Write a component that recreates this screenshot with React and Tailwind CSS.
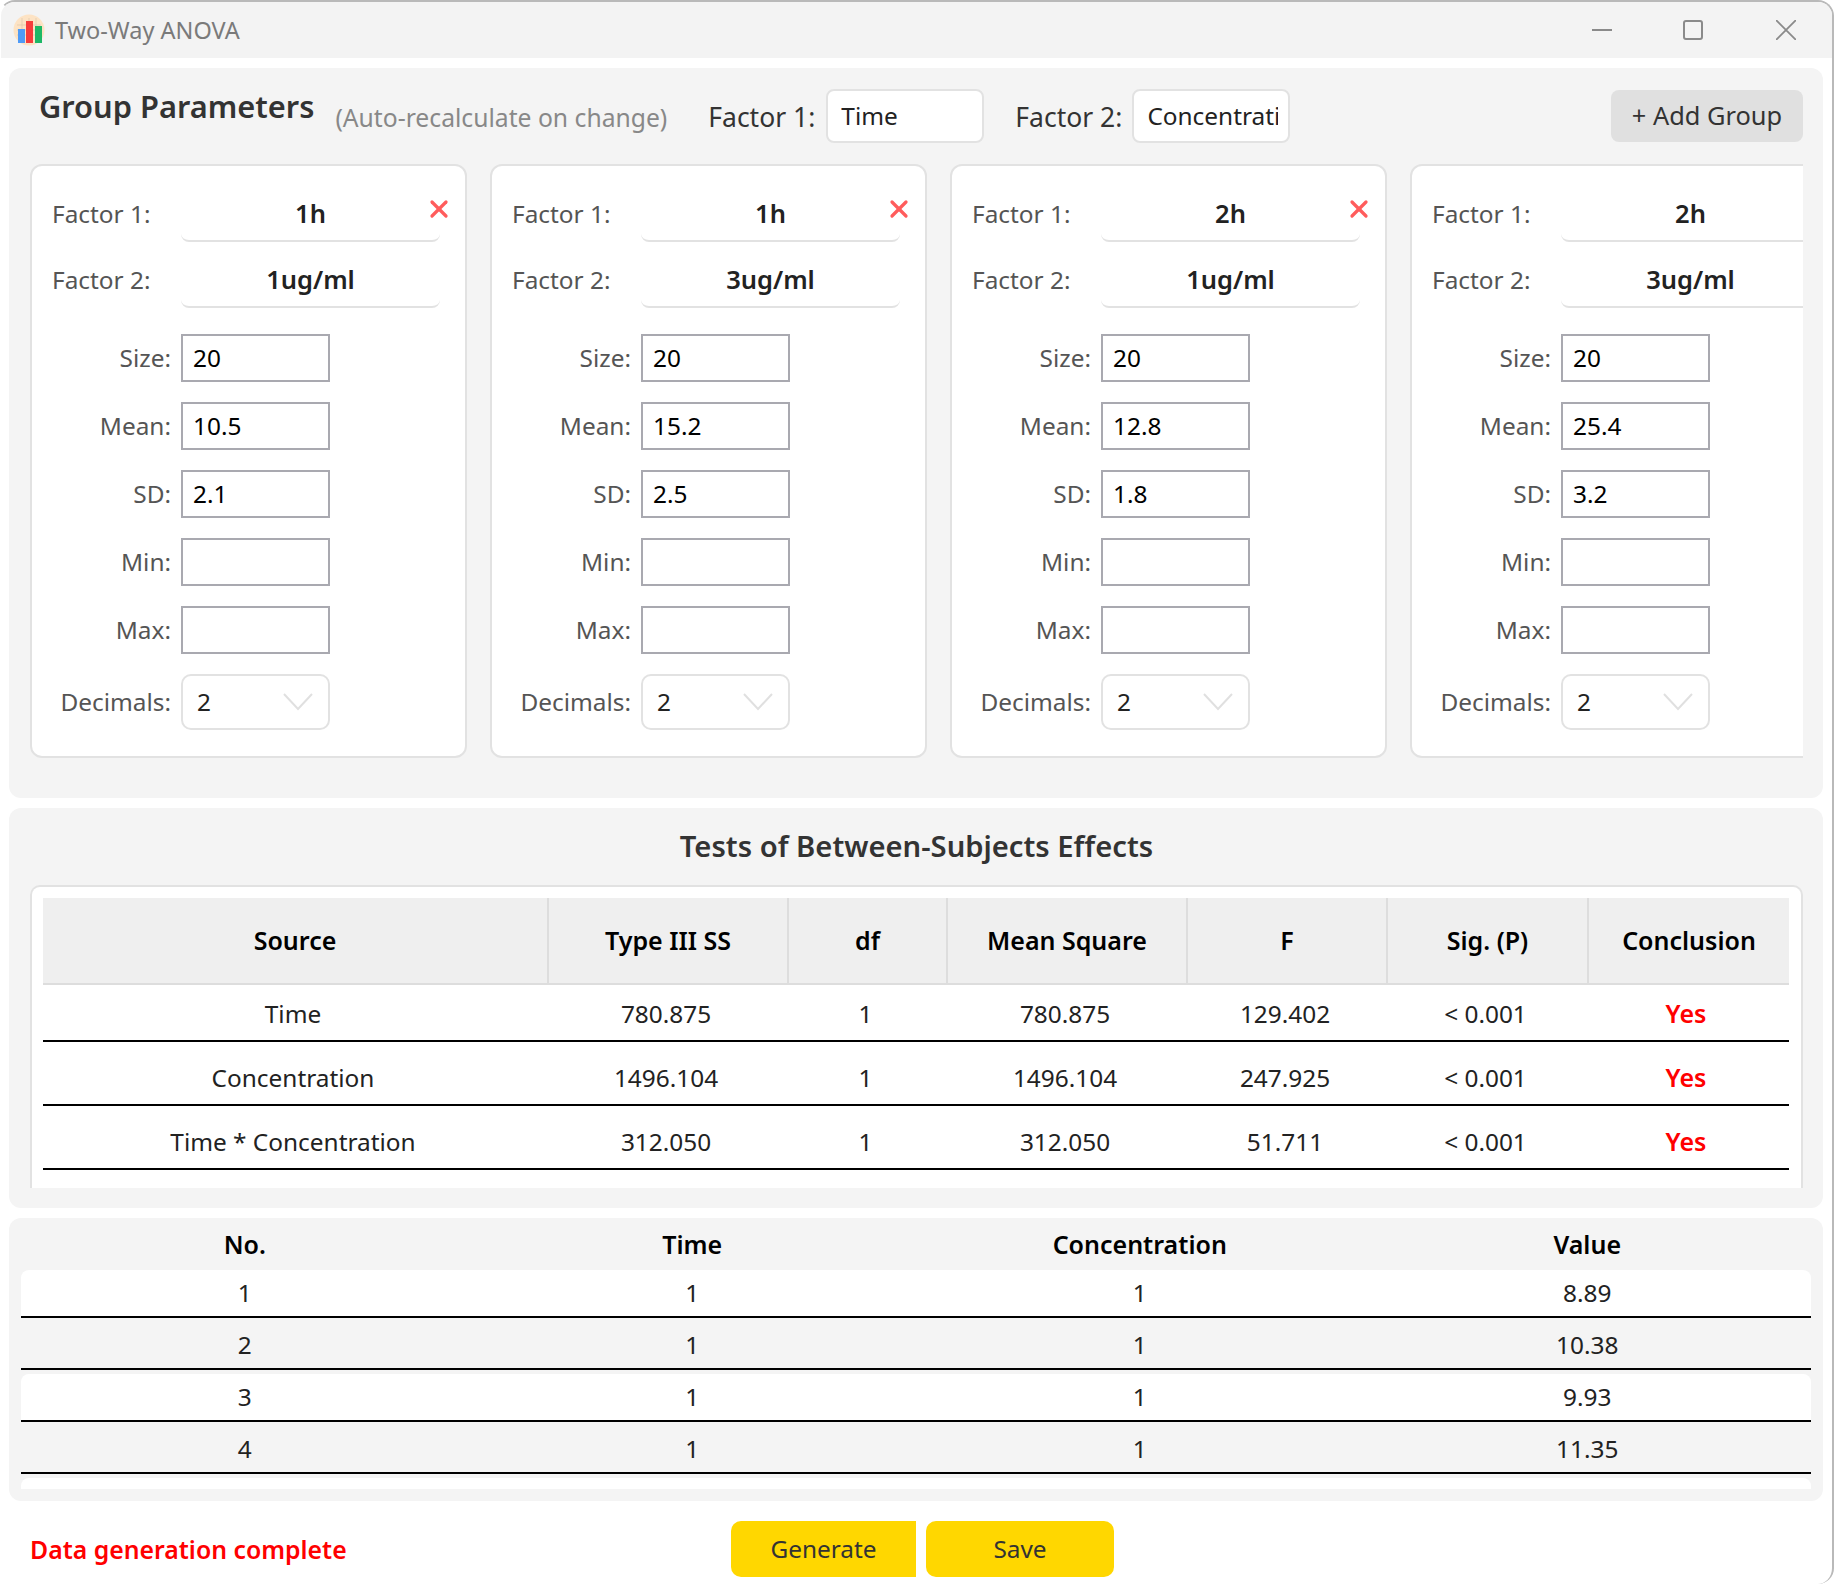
import React from "react";
import { X } from "lucide-react";

const groups = [
  { f1: "1h", f2: "1ug/ml", mean: "10.5", sd: "2.1", del: true },
  { f1: "1h", f2: "3ug/ml", mean: "15.2", sd: "2.5", del: true },
  { f1: "2h", f2: "1ug/ml", mean: "12.8", sd: "1.8", del: true },
  { f1: "2h", f2: "3ug/ml", mean: "25.4", sd: "3.2", del: false },
];

const effects = [
  ["Time", "780.875", "1", "780.875", "129.402", "< 0.001"],
  ["Concentration", "1496.104", "1", "1496.104", "247.925", "< 0.001"],
  ["Time * Concentration", "312.050", "1", "312.050", "51.711", "< 0.001"],
];

const effectCols = "grid grid-cols-[506px_240px_159px_240px_200px_201px_200px]";
const effectHead = ["Source", "Type III SS", "df", "Mean Square", "F", "Sig. (P)", "Conclusion"];

const rows = [
  ["1", "1", "1", "8.89"],
  ["2", "1", "1", "10.38"],
  ["3", "1", "1", "9.93"],
  ["4", "1", "1", "11.35"],
];

function AppIcon() {
  return (
    <svg width="32" height="32" viewBox="0 0 32 32" className="shrink-0">
      <circle cx="16" cy="16" r="15.5" fill="#fde3c4" />
      <path d="M4 11h24M4 16h24M4 21h24M9 4v24M16 4v24M23 4v24" stroke="#d8c3a8" strokeWidth="0.6" />
      <rect x="5" y="15" width="7" height="14" fill="#4f9bf7" />
      <rect x="13" y="7" width="7" height="22" fill="#f73b3b" />
      <rect x="22" y="12" width="7" height="17" fill="#1db866" />
    </svg>
  );
}

function NumField({ label, value }) {
  return (
    <div className="flex items-center">
      <label className="w-[139px] text-right pr-[10px] text-[#555]">{label}</label>
      <input
        readOnly
        value={value}
        className="w-[149px] h-[48px] border-2 border-[#a9a9b0] bg-white pl-[10px] pb-[2px] text-black outline-none"
      />
    </div>
  );
}

function FactorRow({ label, value, className }) {
  return (
    <div className={`flex items-center h-[55px] ${className}`}>
      <span className="w-[129px] text-[#555]">{label}</span>
      <div className="w-[259px] h-[55px] shrink-0 flex items-center justify-center text-[25.5px] font-semibold text-[#222] border-b-2 border-[#e2e2e2] rounded-b-[8px]">
        {value}
      </div>
    </div>
  );
}

function GroupCard({ g }) {
  return (
    <div className="relative w-[437px] h-[594px] shrink-0 bg-white border-2 border-[#e2e2e2] rounded-[12px] pt-[21px] pl-[20px]">
      {g.del && (
        <X className="absolute left-[393px] top-[29px] text-[#ff5c5c]" size={28} strokeWidth={2.8} />
      )}
      <FactorRow label="Factor 1:" value={g.f1} />
      <FactorRow label="Factor 2:" value={g.f2} className="mt-[11px]" />
      <div className="flex flex-col gap-[20px] mt-[26px] -ml-[10px]">
        <NumField label="Size:" value="20" />
        <NumField label="Mean:" value={g.mean} />
        <NumField label="SD:" value={g.sd} />
        <NumField label="Min:" value="" />
        <NumField label="Max:" value="" />
        <div className="flex items-center">
          <label className="w-[139px] text-right pr-[10px] text-[#555]">Decimals:</label>
          <div className="w-[149px] h-[56px] border-2 border-[#e2e2e2] rounded-[10px] bg-white flex items-center justify-between pl-[14px] pr-[15px] text-[#222]">
            <span>2</span>
            <svg width="30" height="18" viewBox="0 0 30 18" fill="none" stroke="#e0e0e0" strokeWidth="2">
              <path d="M1 1l14 15L29 1" />
            </svg>
          </div>
        </div>
      </div>
    </div>
  );
}

export default function App() {
  return (
    <div className="w-[1836px] h-[1584px] bg-white overflow-hidden font-['Noto_Sans','Open_Sans',sans-serif] text-[24.4px] leading-none">
      <div className="w-[1835px] h-[1584px] -ml-px flex flex-col border-2 border-b-0 border-[#b9b9b9] border-l-transparent rounded-[16px] overflow-hidden">
        {/* title bar */}
        <div className="h-[56px] shrink-0 bg-[#f3f3f3] flex items-center pl-[12px] pr-[36px]">
          <AppIcon />
          <span className="ml-[10px] pt-[2px] text-[23.5px] text-[#7a7a7a]">Two-Way ANOVA</span>
          <div className="ml-auto flex items-center text-[#8a8a8a]">
            <svg width="20" height="20" viewBox="0 0 20 20" fill="none" stroke="currentColor" strokeWidth="2"><path d="M0 10h20" /></svg>
            <svg className="ml-[71px]" width="20" height="20" viewBox="0 0 20 20" fill="none" stroke="currentColor" strokeWidth="2"><rect x="1" y="1" width="18" height="18" rx="2" /></svg>
            <svg className="ml-[73px]" width="20" height="20" viewBox="0 0 20 20" fill="none" stroke="currentColor" strokeWidth="1.8"><path d="M0 0l20 20M20 0L0 20" /></svg>
          </div>
        </div>

        {/* group parameters */}
        <div className="mt-[10px] ml-[8px] mr-[9px] h-[730px] shrink-0 bg-[#f4f4f4] rounded-[12px] pl-[21px] pr-[20px]">
          <div className="h-[96px] flex items-start">
            <h2 className="mt-[23px] ml-[9px] text-[30.8px] font-semibold text-[#333]">Group Parameters</h2>
            <span className="mt-[38px] ml-[21px] text-[24.7px] text-[#888]">(Auto-recalculate on change)</span>
            <span className="mt-[36px] ml-[41px] text-[26.5px] text-[#333]">Factor 1:</span>
            <input readOnly value="Time" className="mt-[21px] ml-[11px] w-[158px] h-[54px] bg-white border-2 border-[#e2e2e2] rounded-[8px] pl-[13px] pr-[10px] pb-[2px] text-[#222] outline-none" />
            <span className="mt-[36px] ml-[31px] text-[26.5px] text-[#333]">Factor 2:</span>
            <input readOnly value="Concentration" className="mt-[21px] ml-[10px] w-[158px] h-[54px] bg-white border-2 border-[#e2e2e2] rounded-[8px] pl-[13px] pr-[10px] pb-[2px] text-[#222] outline-none" />
            <button className="mt-[22px] ml-auto w-[192px] h-[52px] bg-[#e0e0e0] rounded-[8px] text-[25.4px] text-[#333]">+ Add Group</button>
          </div>
          <div className="flex gap-[23px] overflow-hidden">
            {groups.map((g, i) => (
              <GroupCard key={i} g={g} />
            ))}
          </div>
        </div>

        {/* anova table */}
        <div className="mt-[10px] ml-[8px] mr-[9px] h-[400px] shrink-0 bg-[#f4f4f4] rounded-[12px] pl-[21px] pr-[20px] pt-[24px]">
          <h3 className="text-center text-[29.2px] font-semibold text-[#333] h-[53px]">Tests of Between-Subjects Effects</h3>
          <div className="h-[303px] bg-white border-2 border-b-0 border-[#e2e2e2] rounded-t-[10px] pt-[11px] pl-[11px] pr-[12px] overflow-hidden">
            <div className={`${effectCols} h-[87px] bg-[#efefef] border-b-2 border-[#ddd]`}>
              {effectHead.map((h, i) => (
                <div key={h} className={`flex items-center justify-center text-[25px] font-semibold text-black ${i < 6 ? "border-r-2 border-[#ddd]" : ""}`}>
                  {h}
                </div>
              ))}
            </div>
            {effects.map((r, n) => (
              <div key={r[0]} className={`${effectCols} ${n === 0 ? "h-[57px]" : "h-[64px]"} border-b-2 border-black text-[#222]`}>
                {r.map((c, i) => (
                  <div key={i} className="flex items-end justify-center pr-[6px] pb-[14px]">{c}</div>
                ))}
                <div className="flex items-end justify-center pr-[6px] pb-[14px] text-[25px] font-semibold text-[#f00]">Yes</div>
              </div>
            ))}
          </div>
        </div>

        {/* raw data */}
        <div className="mt-[10px] ml-[8px] mr-[9px] h-[283px] shrink-0 bg-[#f4f4f4] rounded-[12px] px-[12px] overflow-hidden">
          <div className="grid grid-cols-4 h-[52px] items-center text-center text-[25px] font-semibold text-black">
            <div>No.</div>
            <div>Time</div>
            <div>Concentration</div>
            <div>Value</div>
          </div>
          <div className="flex flex-col gap-[4px] h-[219px] overflow-hidden">
            {rows.map((r, i) => (
              <div key={r[0]} className={`grid grid-cols-4 h-[48px] shrink-0 items-center text-center text-[#222] border-b-2 border-black ${i % 2 === 0 ? "bg-white rounded-t-[8px]" : ""}`}>
                {r.map((c, j) => (
                  <div key={j}>{c}</div>
                ))}
              </div>
            ))}
            <div className="h-[48px] shrink-0 bg-white rounded-t-[8px]" />
          </div>
        </div>

        {/* footer */}
        <div className="relative flex-1 flex items-center pl-[21px] mt-[20px] mb-[7px]">
          <span className="ml-[8px] text-[24.8px] font-semibold text-[#f00]">Data generation complete</span>
          <div className="absolute left-[730px] top-0 flex gap-[10px]">
            <button className="w-[185px] h-[56px] bg-[#ffd700] rounded-l-[10px] text-[#333]">Generate</button>
            <button className="w-[188px] h-[56px] bg-[#ffd700] rounded-[10px] text-[#333]">Save</button>
          </div>
        </div>
      </div>
    </div>
  );
}
